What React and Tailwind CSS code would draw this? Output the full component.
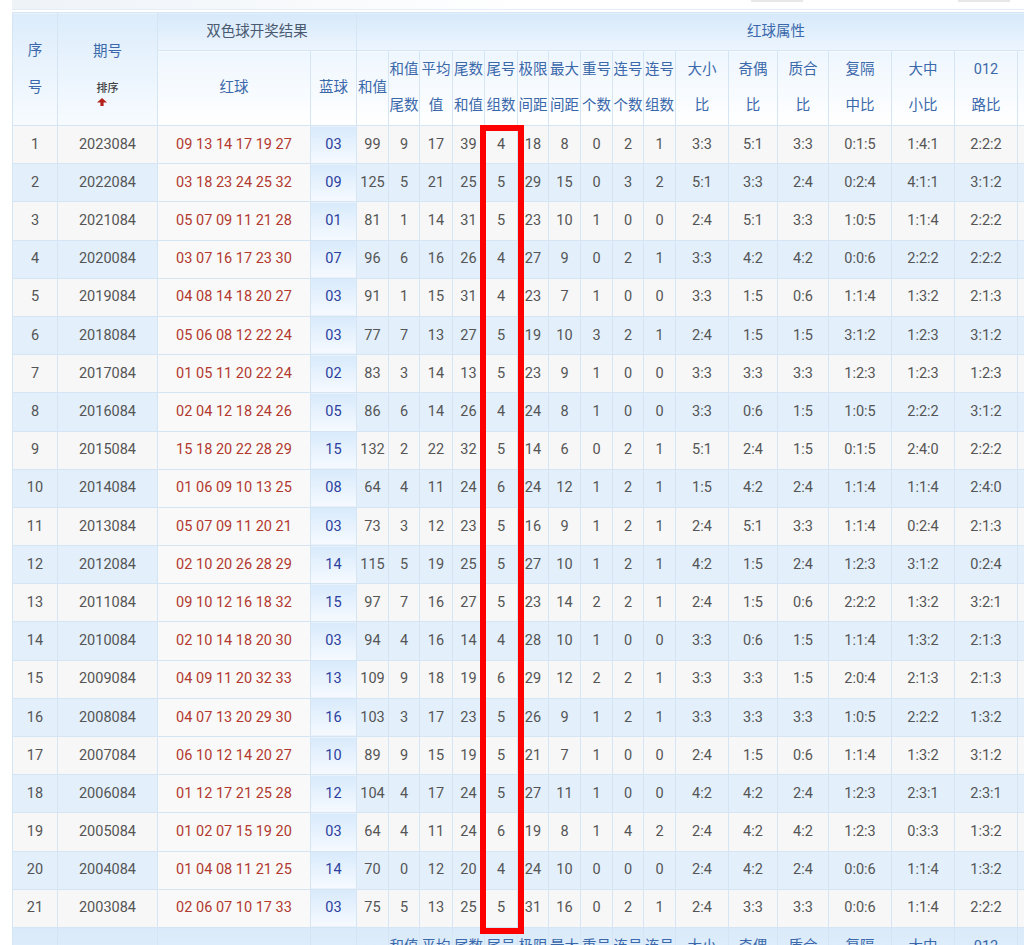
import React from "react";

const rows = [
  ["1","2023084","09 13 14 17 19 27","03","99","9","17","39","4","18","8","0","2","1","3:3","5:1","3:3","0:1:5","1:4:1","2:2:2"],
  ["2","2022084","03 18 23 24 25 32","09","125","5","21","25","5","29","15","0","3","2","5:1","3:3","2:4","0:2:4","4:1:1","3:1:2"],
  ["3","2021084","05 07 09 11 21 28","01","81","1","14","31","5","23","10","1","0","0","2:4","5:1","3:3","1:0:5","1:1:4","2:2:2"],
  ["4","2020084","03 07 16 17 23 30","07","96","6","16","26","4","27","9","0","2","1","3:3","4:2","4:2","0:0:6","2:2:2","2:2:2"],
  ["5","2019084","04 08 14 18 20 27","03","91","1","15","31","4","23","7","1","0","0","3:3","1:5","0:6","1:1:4","1:3:2","2:1:3"],
  ["6","2018084","05 06 08 12 22 24","03","77","7","13","27","5","19","10","3","2","1","2:4","1:5","1:5","3:1:2","1:2:3","3:1:2"],
  ["7","2017084","01 05 11 20 22 24","02","83","3","14","13","5","23","9","1","0","0","3:3","3:3","3:3","1:2:3","1:2:3","1:2:3"],
  ["8","2016084","02 04 12 18 24 26","05","86","6","14","26","4","24","8","1","0","0","3:3","0:6","1:5","1:0:5","2:2:2","3:1:2"],
  ["9","2015084","15 18 20 22 28 29","15","132","2","22","32","5","14","6","0","2","1","5:1","2:4","1:5","0:1:5","2:4:0","2:2:2"],
  ["10","2014084","01 06 09 10 13 25","08","64","4","11","24","6","24","12","1","2","1","1:5","4:2","2:4","1:1:4","1:1:4","2:4:0"],
  ["11","2013084","05 07 09 11 20 21","03","73","3","12","23","5","16","9","1","2","1","2:4","5:1","3:3","1:1:4","0:2:4","2:1:3"],
  ["12","2012084","02 10 20 26 28 29","14","115","5","19","25","5","27","10","1","2","1","4:2","1:5","2:4","1:2:3","3:1:2","0:2:4"],
  ["13","2011084","09 10 12 16 18 32","15","97","7","16","27","5","23","14","2","2","1","2:4","1:5","0:6","2:2:2","1:3:2","3:2:1"],
  ["14","2010084","02 10 14 18 20 30","03","94","4","16","14","4","28","10","1","0","0","3:3","0:6","1:5","1:1:4","1:3:2","2:1:3"],
  ["15","2009084","04 09 11 20 32 33","13","109","9","18","19","6","29","12","2","2","1","3:3","3:3","1:5","2:0:4","2:1:3","2:1:3"],
  ["16","2008084","04 07 13 20 29 30","16","103","3","17","23","5","26","9","1","2","1","3:3","3:3","3:3","1:0:5","2:2:2","1:3:2"],
  ["17","2007084","06 10 12 14 20 27","10","89","9","15","19","5","21","7","1","0","0","2:4","1:5","0:6","1:1:4","1:3:2","3:1:2"],
  ["18","2006084","01 12 17 21 25 28","12","104","4","17","24","5","27","11","1","0","0","4:2","4:2","2:4","1:2:3","2:3:1","2:3:1"],
  ["19","2005084","01 02 07 15 19 20","03","64","4","11","24","6","19","8","1","4","2","2:4","4:2","4:2","1:2:3","0:3:3","1:3:2"],
  ["20","2004084","01 04 08 11 21 25","14","70","0","12","20","4","24","10","0","0","0","2:4","4:2","2:4","0:0:6","1:1:4","1:3:2"],
  ["21","2003084","02 06 07 10 17 33","03","75","5","13","25","5","31","16","0","2","1","2:4","3:3","3:3","0:0:6","1:1:4","2:2:2"],
];

const widths = [45,100,153,46,32,31,33,32,33,31,32,32,31,32,53,49,51,63,63,63,59,59,59];

const subHeads = [
  ["和值","尾数"],["平均","值"],["尾数","和值"],["尾号","组数"],["极限","间距"],["最大","间距"],
  ["重号","个数"],["连号","个数"],["连号","组数"],["大小","比"],["奇偶","比"],["质合","比"],
  ["复隔","中比"],["大中","小比"],["012","路比"],["",""],["",""],["",""],
];

const bd = "border border-[#d5e5f4]";
const headTxt = "text-[#3a68aa]";
const grpBg = "bg-linear-to-b from-[#d6e9fa] to-[#edf5fe]";
const spanBg = "bg-linear-to-b from-[#dcecfb] to-[#f7fbff]";
const subBg = "bg-linear-to-b from-[#eef6fe] to-[#ffffff]";
const footBg = "bg-linear-to-b from-[#d9eafa] to-[#eaf4fd]";

function Arrow() {
  return (
    <svg width="10" height="8" viewBox="0 0 10 8" className="block">
      <path d="M5 0 L10 4.5 H6.6 V8 H3.4 V4.5 H0 Z" fill="#b3231b" />
    </svg>
  );
}

function SubHeadRow({ bg, withSpans }) {
  return (
    <tr className="h-[75px]">
      {withSpans && (
        <>
          <th rowSpan={2} className={`${bd} ${bg} ${headTxt} font-normal p-0`}></th>
          <th rowSpan={2} className={`${bd} ${bg} ${headTxt} font-normal p-0`}></th>
        </>
      )}
      <th className={`${bd} ${bg} ${headTxt} font-normal p-0`}>红球</th>
      <th className={`${bd} ${bg} ${headTxt} font-normal p-0`}>蓝球</th>
      <th className={`${bd} ${bg} ${headTxt} font-normal p-0`}>和值</th>
      {subHeads.map((s, i) => (
        <th key={i} className={`${bd} ${bg} ${headTxt} font-normal p-0 leading-[36px] whitespace-nowrap`}>
          {s[0]}
          <br />
          {s[1]}
        </th>
      ))}
    </tr>
  );
}

export default function App() {
  return (
    <div
      className="relative w-[1024px] h-[945px] overflow-hidden bg-white"
      style={{ fontFamily: 'Roboto, "Noto Sans CJK SC", "Noto Sans", sans-serif' }}
    >
      <div className="ml-[12px] h-[10px] flex items-start bg-linear-to-r from-[#eef3f8] via-white to-white border-b border-[#e4edf6]">
        <div className="flex-1" />
        <div className="w-[52px] h-[2px] bg-[#e8e8e8] mr-[155px]" />
        <div className="w-[52px] h-[2px] bg-[#e8e8e8] mr-[14px]" />
      </div>
      <div className="pl-[12px] pt-[2px]">
        <table className="table-fixed border-collapse w-[1182px] text-[14.5px]">
          <colgroup>
            {widths.map((w, i) => (
              <col key={i} style={{ width: w }} />
            ))}
          </colgroup>
          <thead>
            <tr className="h-[38px]">
              <th rowSpan={2} className={`${bd} ${spanBg} ${headTxt} font-normal p-0 leading-[37px]`}>
                序<br />号
              </th>
              <th rowSpan={2} className={`${bd} ${spanBg} ${headTxt} font-normal p-0`}>
                <div className="flex flex-col items-center">
                  <span className="leading-[37px]">期号</span>
                  <span className="text-[11px] leading-[14px] text-[#444] mt-[12px] font-medium">排序</span>
                  <span className="mt-[2px] mr-[12px]">
                    <Arrow />
                  </span>
                </div>
              </th>
              <th colSpan={2} className={`${bd} ${grpBg} ${headTxt} font-normal p-0 text-[#4a5a70]`}>
                双色球开奖结果
              </th>
              <th colSpan={19} className={`${bd} ${grpBg} ${headTxt} font-normal p-0`}>
                <div className="w-[838px] text-center">红球属性</div>
              </th>
            </tr>
            <SubHeadRow bg={subBg} withSpans={false} />
          </thead>
          <tbody>
            {rows.map((r, i) => {
              const rowBg = i % 2 === 0 ? "bg-[#f7f7f7]" : "bg-[#e3f0fc]";
              return (
                <tr key={i} className="h-[38.2px]">
                  {r.map((c, j) => {
                    let cls = `${bd} ${rowBg} text-[#555] p-0 text-center whitespace-nowrap`;
                    if (j === 2) cls = `${bd} bg-[#f9f9f9] text-[#b2392f] p-0 text-center whitespace-nowrap`;
                    if (j === 3) cls = `${bd} bg-linear-to-b from-[#d8eafb] to-[#f6faff] text-[#2d3f9e] p-0 text-center`;
                    return (
                      <td key={j} className={cls}>
                        {c}
                      </td>
                    );
                  })}
                  <td className={`${bd} ${rowBg} p-0`}></td>
                  <td className={`${bd} ${rowBg} p-0`}></td>
                  <td className={`${bd} ${rowBg} p-0`}></td>
                </tr>
              );
            })}
          </tbody>
          <tfoot>
            <tr className="h-[75px]">
              <th rowSpan={2} className={`${bd} ${footBg} ${headTxt} font-normal p-0 leading-[37px]`}>
                序<br />号
              </th>
              <th rowSpan={2} className={`${bd} ${footBg} ${headTxt} font-normal p-0`}>期号</th>
              <th className={`${bd} ${footBg} ${headTxt} font-normal p-0`}>红球</th>
              <th className={`${bd} ${footBg} ${headTxt} font-normal p-0`}>蓝球</th>
              <th className={`${bd} ${footBg} ${headTxt} font-normal p-0`}>和值</th>
              {subHeads.map((s, i) => (
                <th key={i} className={`${bd} ${footBg} ${headTxt} font-normal p-0 leading-[36px] whitespace-nowrap`}>
                  {s[0]}
                  <br />
                  {s[1]}
                </th>
              ))}
            </tr>
            <tr className="h-[38px]">
              <th colSpan={2} className={`${bd} ${footBg} ${headTxt} font-normal p-0`}>双色球开奖结果</th>
              <th colSpan={19} className={`${bd} ${footBg} ${headTxt} font-normal p-0`}>红球属性</th>
            </tr>
          </tfoot>
        </table>
      </div>
      <div className="absolute left-[480px] top-[125px] w-[44px] h-[809px] border-[6px] border-[#ff0000]" />
    </div>
  );
}
